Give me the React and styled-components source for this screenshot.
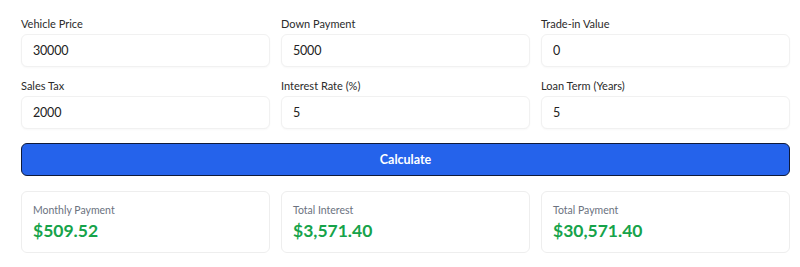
import React from 'react'
import styled, { createGlobalStyle } from 'styled-components'

const GlobalStyle = createGlobalStyle`
  body {
    margin: 0;
    background: #ffffff;
    font-family: Lato, "Open Sans", sans-serif;
    color: #222;
  }
`

const Page = styled.div`
  padding: 16px 10px 14px 21px;
  display: flex;
  flex-direction: column;
`

const Grid = styled.div`
  display: grid;
  grid-template-columns: repeat(3, 1fr);
  column-gap: 11px;
  row-gap: 11px;
`

const Field = styled.div`
  display: flex;
  flex-direction: column;
`

const Label = styled.label`
  font-size: 11px;
  line-height: 15px;
  color: #2b2b2b;
  margin-bottom: 3px;
`

const Input = styled.input`
  box-sizing: border-box;
  height: 33px;
  padding: 0 11px;
  font-family: inherit;
  font-size: 12.5px;
  letter-spacing: -0.2px;
  color: #222;
  border: 1px solid #f1f1f1;
  border-radius: 6px;
  box-shadow: 0 1px 2px rgba(0, 0, 0, 0.03);
  outline: none;
  background: #fff;
`

const Button = styled.button`
  margin: 14px 0 15px;
  height: 33px;
  font-family: inherit;
  font-size: 12.5px;
  font-weight: 700;
  color: #fff;
  background: #2563eb;
  border: 1px solid #0f1a3a;
  border-radius: 6px;
  cursor: pointer;
`

const Card = styled.div`
  box-sizing: border-box;
  height: 62px;
  padding: 10px 11px;
  border: 1px solid #eeeeee;
  border-radius: 6px;
  background: #fff;
`

const CardLabel = styled.div`
  font-size: 10.5px;
  line-height: 16px;
  color: #6b7280;
`

const CardValue = styled.div`
  font-size: 17.5px;
  line-height: 26px;
  font-weight: 700;
  color: #16a34a;
`

const fields = [
  ['Vehicle Price', '30000'],
  ['Down Payment', '5000'],
  ['Trade-in Value', '0'],
  ['Sales Tax', '2000'],
  ['Interest Rate (%)', '5'],
  ['Loan Term (Years)', '5'],
]

const results = [
  ['Monthly Payment', '$509.52'],
  ['Total Interest', '$3,571.40'],
  ['Total Payment', '$30,571.40'],
]

export default function App() {
  return (
    <>
      <GlobalStyle />
      <Page>
        <Grid>
          {fields.map(([label, value]) => (
            <Field key={label}>
              <Label>{label}</Label>
              <Input type="number" defaultValue={value} />
            </Field>
          ))}
        </Grid>
        <Button>Calculate</Button>
        <Grid>
          {results.map(([label, value]) => (
            <Card key={label}>
              <CardLabel>{label}</CardLabel>
              <CardValue>{value}</CardValue>
            </Card>
          ))}
        </Grid>
      </Page>
    </>
  )
}
